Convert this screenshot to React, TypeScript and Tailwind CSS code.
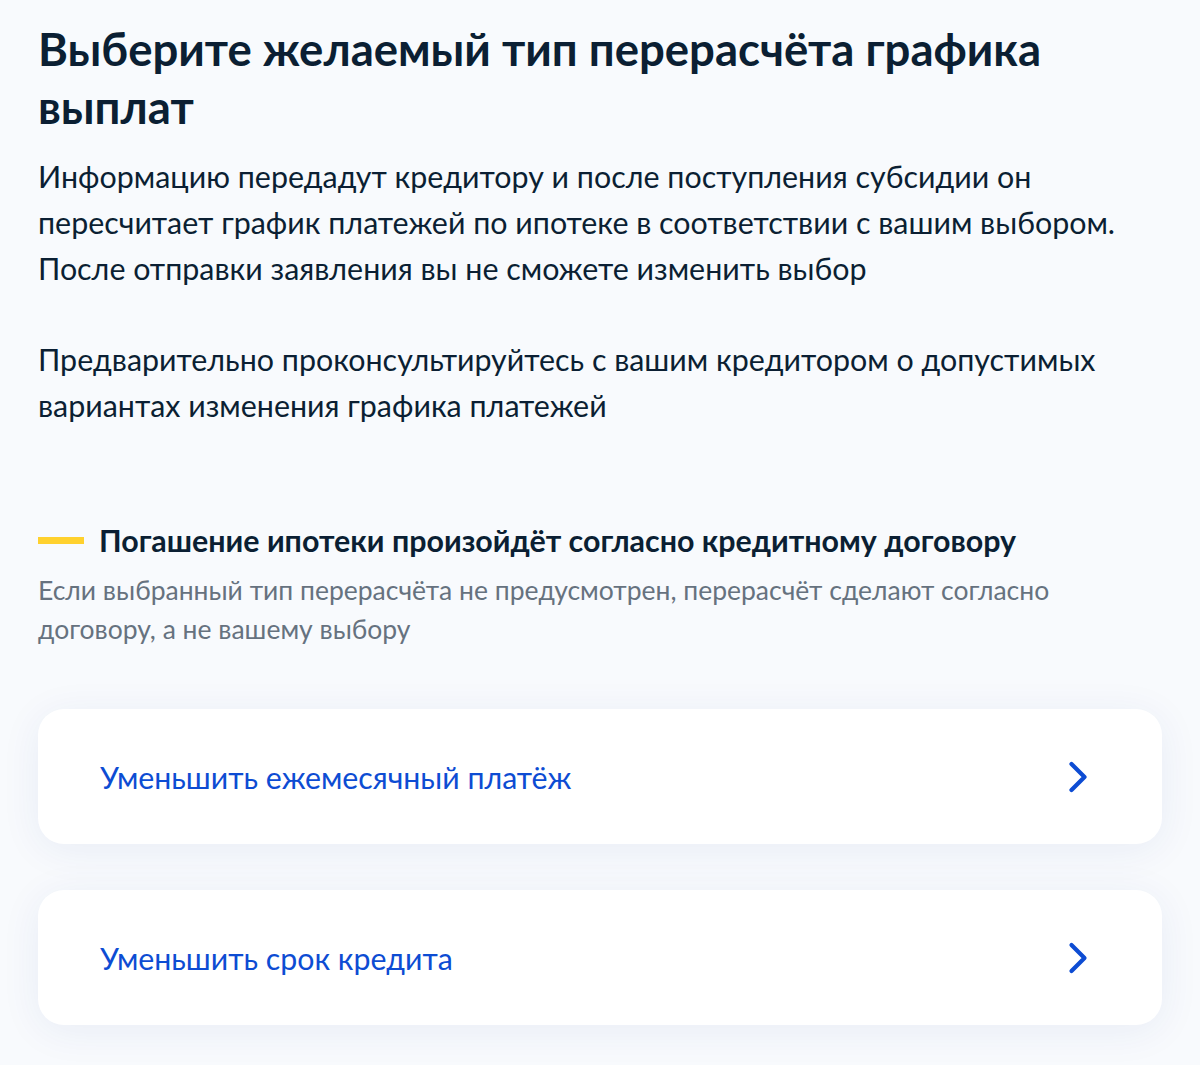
const options = ["Уменьшить ежемесячный платёж", "Уменьшить срок кредита"];

const Chevron = () => (
  <svg width="20" height="32" viewBox="0 0 20 32" fill="none" className="shrink-0">
    <path d="M3.5 3l13 13-13 13" stroke="#0D4CD3" strokeWidth="4.2" strokeLinecap="round" strokeLinejoin="round" />
  </svg>
);

export default function App() {
  return (
    <div
      className="min-h-[1065px] w-full bg-[#F8FAFD] px-[38px] pt-[20px] pb-[40px] text-[#0B1F33]"
      style={{ fontFamily: "Lato, 'Noto Sans', sans-serif" }}
    >
      <h1 className="text-[45.5px] font-bold leading-[58px]">
        Выберите желаемый тип перерасчёта графика выплат
      </h1>

      <div className="mt-[17px] text-[30.4px] leading-[46px]">
        <p>
          Информацию передадут кредитору и после поступления субсидии он пересчитает график платежей по ипотеке
          в соответствии с вашим выбором. После отправки заявления вы не сможете изменить выбор
        </p>
        <p className="mt-[45px]">
          Предварительно проконсультируйтесь с вашим кредитором о допустимых вариантах изменения графика платежей
        </p>
      </div>

      <div className="mt-[92px]">
        <div className="flex items-center gap-[15px]">
          <span className="h-[7px] w-[46px] shrink-0 bg-[#FFD12E]" />
          <h2 className="text-[30.4px] font-bold leading-[40px]">
            Погашение ипотеки произойдёт согласно кредитному договору
          </h2>
        </div>
        <p className="mt-[11px] text-[26.5px] leading-[39px] text-[#66727F]">
          Если выбранный тип перерасчёта не предусмотрен, перерасчёт сделают согласно договору, а не вашему выбору
        </p>
      </div>

      <div className="mt-[60px] flex flex-col gap-[46px]">
        {options.map(label => (
          <button
            key={label}
            className="flex h-[135px] w-full items-center justify-between rounded-[26px] bg-white pl-[62px] pr-[74px] text-left shadow-[0_6px_40px_rgba(30,60,140,0.07)]"
          >
            <span className="text-[30.3px] leading-[40px] text-[#0D4CD3]">{label}</span>
            <Chevron />
          </button>
        ))}
      </div>
    </div>
  );
}
